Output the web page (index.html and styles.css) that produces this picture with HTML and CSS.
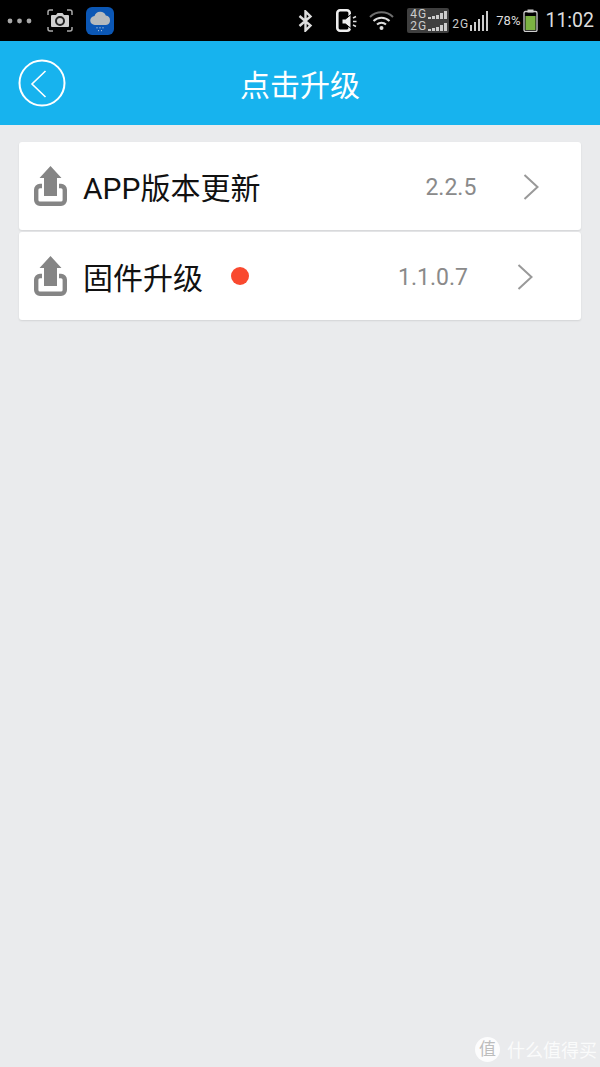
FILE: index.html
```html
<!DOCTYPE html>
<html lang="en">
<head>
    <meta charset="UTF-8">
    <meta name="viewport" content="width=device-width, initial-scale=1.0">
    <title>点击升级</title>
    <link rel="stylesheet" href="styles.css">
</head>
<body>

    <div id="container">
        <!-- status bar -->
        <div class="status-bar">
            <div class="status-left">
                <svg class="dots" width="26" height="6" viewBox="0 0 26 6"><circle cx="3" cy="3" r="2.400"/><circle cx="12.500" cy="3" r="2.400"/><circle cx="22" cy="3" r="2.400"/></svg>
                <svg class="shot" width="26" height="23" viewBox="0 0 26 23">
                    <path d="M1 6V3a2 2 0 0 1 2-2h3M20 1h3a2 2 0 0 1 2 2v3M1 18v2a2 2 0 0 0 2 2h3M20 22h3a2 2 0 0 0 2-2v-2" fill="none" stroke="#aaa" stroke-width="1.500"/>
                    <path d="M5 6h4l1.500-2h5L17 6h4a1 1 0 0 1 1 1v10a1 1 0 0 1-1 1H5a1 1 0 0 1-1-1V7a1 1 0 0 1 1-1z" fill="#cfcfcf"/>
                    <circle cx="13" cy="12" r="4" fill="none" stroke="#222" stroke-width="2"/>
                </svg>
                <div class="app-icon">
                    <svg width="28" height="28" viewBox="0 0 28 28">
                        <path d="M9 18a4.500 4.500 0 0 1-.5-9 6 6 0 0 1 11.300-.5A4.800 4.800 0 0 1 20 18z" fill="#b5babd"/>
                        <path d="M11 20v1.500M14 20v1.500M17 20v1.500M12.500 23v1.200M15.500 23v1.200" stroke="#9db8d8" stroke-width="1"/>
                    </svg>
                </div>
            </div>
            <div class="status-right">
                <svg class="bt" width="15" height="22" viewBox="0 0 15 22"><path d="M1.500 6l11 9.500L7.500 20.500V1.500l5 5-11 9.500" fill="none" stroke="#ddd" stroke-width="2.400"/></svg>
                <svg class="phone" width="22" height="23" viewBox="0 0 22 23">
                    <path d="M11 1.300H4A2.700 2.700 0 0 0 1.300 4v15A2.700 2.700 0 0 0 4 21.700h7A2.700 2.700 0 0 0 13.700 19V4A2.700 2.700 0 0 0 11 1.300z" fill="none" stroke="#eee" stroke-width="2.600"/>
                    <path d="M6 10h3.500L15 5.500v14L9.500 15H6z" fill="#eee" stroke="#000" stroke-width="1"/>
                    <path d="M17 9l3-1.500M17 12.500h3.500M17 16l3 1.500" stroke="#ddd" stroke-width="1.500"/>
                </svg>
                <svg class="wifi" width="25" height="20" viewBox="0 0 25 20">
                    <path d="M1 6a16.500 16.500 0 0 1 23 0" fill="none" stroke="#6e6e6e" stroke-width="2"/>
                    <path d="M4.500 10a11.500 11.500 0 0 1 16 0M8 13.500a6.500 6.500 0 0 1 9 0" fill="none" stroke="#ddd" stroke-width="2"/>
                    <circle cx="12.500" cy="17" r="2" fill="#ddd"/>
                </svg>
                <div class="sim-box">
                    <div class="sim-row"><span>4G</span><i class="sig"><b class="b1"></b><b class="b2"></b><b class="b3"></b><b class="b4"></b><b class="b5"></b></i></div>
                    <div class="sim-row"><span>2G</span><i class="sig"><b class="b1"></b><b class="b2"></b><b class="b3"></b><b class="b4"></b><b class="b5"></b></i></div>
                </div>
                <div class="net">
                    <span>2G</span>
                    <i class="bars"><b class="h1"></b><b class="h2"></b><b class="h3"></b><b class="h4"></b><b class="h5"></b></i>
                </div>
                <span class="percent">78%</span>
                <svg class="battery" width="15" height="23" viewBox="0 0 15 23">
                    <rect x="4.500" y="0.500" width="6" height="3" fill="#cfcfcf"/>
                    <rect x="1" y="2.500" width="13" height="20" rx="1.500" fill="none" stroke="#cfcfcf" stroke-width="1.300"/>
                    <rect x="2.500" y="7" width="10" height="14" fill="#7cb342"/>
                </svg>
                <span class="clock">11:02</span>
            </div>
        </div>

        <!-- title bar -->
        <div class="title-bar">
            <svg class="back" width="48" height="48" viewBox="0 0 48 48">
                <circle cx="24" cy="24" r="22.500" fill="none" stroke="#fff" stroke-width="2"/>
                <path d="M27.500 12L14 25l13.500 13" fill="none" stroke="#fff" stroke-width="1.600"/>
            </svg>
            <h1>点击升级</h1>
        </div>

        <!-- upgrade list -->
        <div class="list">
            <div class="card">
                <svg class="upload" width="33" height="42" viewBox="0 0 33 42">
                    <path d="M8 21H6a3.800 3.800 0 0 0-3.800 3.800V35a3.800 3.800 0 0 0 3.800 3.800h21a3.800 3.800 0 0 0 3.800-3.800V24.800A3.800 3.800 0 0 0 27 21h-2" fill="none" stroke="#858585" stroke-width="4.400"/>
                    <path d="M16.500 1L27.500 13H23v18H10V13H5.500z" fill="#858585"/>
                </svg>
                <span class="name">APP版本更新</span>
                <span class="version ver-a">2.2.5</span>
                <svg class="arrow" width="16" height="26" viewBox="0 0 16 26"><path d="M1.500 1l13 12-13 12" fill="none" stroke="#999" stroke-width="2"/></svg>
            </div>
            <div class="card card-b">
                <svg class="upload" width="33" height="42" viewBox="0 0 33 42">
                    <path d="M8 21H6a3.800 3.800 0 0 0-3.800 3.800V35a3.800 3.800 0 0 0 3.800 3.800h21a3.800 3.800 0 0 0 3.800-3.800V24.800A3.800 3.800 0 0 0 27 21h-2" fill="none" stroke="#858585" stroke-width="4.400"/>
                    <path d="M16.500 1L27.500 13H23v18H10V13H5.500z" fill="#858585"/>
                </svg>
                <span class="name">固件升级</span>
                <span class="red-dot"></span>
                <span class="version ver-b">1.1.0.7</span>
                <svg class="arrow" width="16" height="26" viewBox="0 0 16 26"><path d="M1.500 1l13 12-13 12" fill="none" stroke="#999" stroke-width="2"/></svg>
            </div>
        </div>

        <!-- watermark -->
        <div class="watermark">
            <span class="mark-circle">值</span>
            <span class="mark-text">什么值得买</span>
        </div>
    </div>

</body>
</html>
```

FILE: styles.css
```css
body {
    margin: 0;
    background-color: #eaebed;
    font-family: Roboto, "Noto Sans CJK SC", sans-serif;
}
#container {
    position: relative;
    width: 600px;
    height: 1067px;
    overflow: hidden;
}

/* status bar */
.status-bar {
    height: 41px;
    background-color: #000;
    display: flex;
    justify-content: space-between;
    align-items: center;
}
.status-left {
    display: flex;
    align-items: center;
    padding-left: 7px;
}
.dots {
    fill: #a8a8a8;
}
.shot {
    margin-left: 14px;
}
.app-icon {
    width: 28px;
    height: 28px;
    margin-left: 13px;
    border-radius: 6px;
    background-color: #0b57b5;
}
.status-right {
    display: flex;
    align-items: center;
    padding-right: 6px;
    color: #ddd;
}
.phone {
    margin-left: 23px;
}
.wifi {
    margin-left: 11px;
}
.sim-box {
    width: 42px;
    height: 25px;
    margin-left: 13px;
    padding: 1px 0 0 3px;
    box-sizing: border-box;
    border-radius: 2px;
    background-color: #3f3f3f;
}
.sim-row {
    display: flex;
    align-items: center;
    height: 11px;
    gap: 1px;
    margin-bottom: 1px;
}
.sim-row span {
    font-size: 12px;
    line-height: 11px;
    width: 17px;
    letter-spacing: 1px;
    color: #ccc;
}
.sig {
    display: flex;
    align-items: flex-end;
    gap: 1px;
    height: 9px;
}
.sig b {
    width: 3px;
    background-color: #ccc;
}
.b1 { height: 2px; }
.b2 { height: 3px; }
.b3 { height: 4px; }
.b4 { height: 6px; }
.b5 { height: 8px; }
.net {
    display: flex;
    align-items: flex-end;
    margin-left: 3px;
    gap: 3px;
    height: 20px;
}
.net span {
    width: 15px;
    font-size: 12px;
    line-height: 13px;
    letter-spacing: 1px;
    color: #ccc;
}
.bars {
    display: flex;
    align-items: flex-end;
    gap: 2px;
}
.bars b {
    width: 2px;
    background-color: #ccc;
}
.h1 { height: 6px; }
.h2 { height: 9px; }
.h3 { height: 12px; }
.h4 { height: 16px; }
.h5 { height: 20px; }
.percent {
    margin-left: 8px;
    font-size: 13px;
    color: #ddd;
}
.battery {
    margin-left: 3px;
}
.clock {
    margin-left: 7px;
    font-size: 19.500px;
    color: #ddd;
}

/* title bar */
.title-bar {
    position: relative;
    height: 84px;
    background-color: #17b3ee;
    display: flex;
    justify-content: center;
    align-items: center;
}
.title-bar h1 {
    margin: 0;
    font-size: 30px;
    font-weight: 400;
    color: #fff;
}
.back {
    position: absolute;
    left: 18px;
    top: 18px;
}

/* list */
.list {
    padding: 17px 19px 0;
    display: flex;
    flex-direction: column;
    gap: 2px;
}
.card {
    height: 88px;
    padding-left: 15px;
    background-color: #fff;
    border-radius: 3px;
    box-shadow: 0 1px 2px rgba(0, 0, 0, 0.1);
    display: flex;
    align-items: center;
}
.name {
    margin-left: 16px;
    font-size: 30px;
    color: #111;
}
.version {
    margin-top: 3px;
    font-size: 23px;
    color: #8a8a8a;
}
.ver-a {
    margin-left: 165px;
}
.ver-b {
    margin-left: 149px;
}
.arrow {
    margin-top: 2px;
    margin-left: 47px;
}
.card-b .arrow {
    margin-left: 49px;
}
.red-dot {
    width: 18px;
    height: 18px;
    margin-left: 28px;
    border-radius: 50%;
    background-color: #f9492f;
}

/* watermark */
.watermark {
    position: absolute;
    left: 475px;
    top: 1036px;
    display: flex;
    align-items: center;
    gap: 7px;
    color: #fff;
}
.mark-circle {
    width: 25px;
    height: 25px;
    border-radius: 50%;
    background-color: rgba(255, 255, 255, 0.85);
    color: #bdbdbd;
    font-size: 17px;
    line-height: 25px;
    text-align: center;
}
.mark-text {
    font-size: 18px;
    opacity: 0.8;
}
```
